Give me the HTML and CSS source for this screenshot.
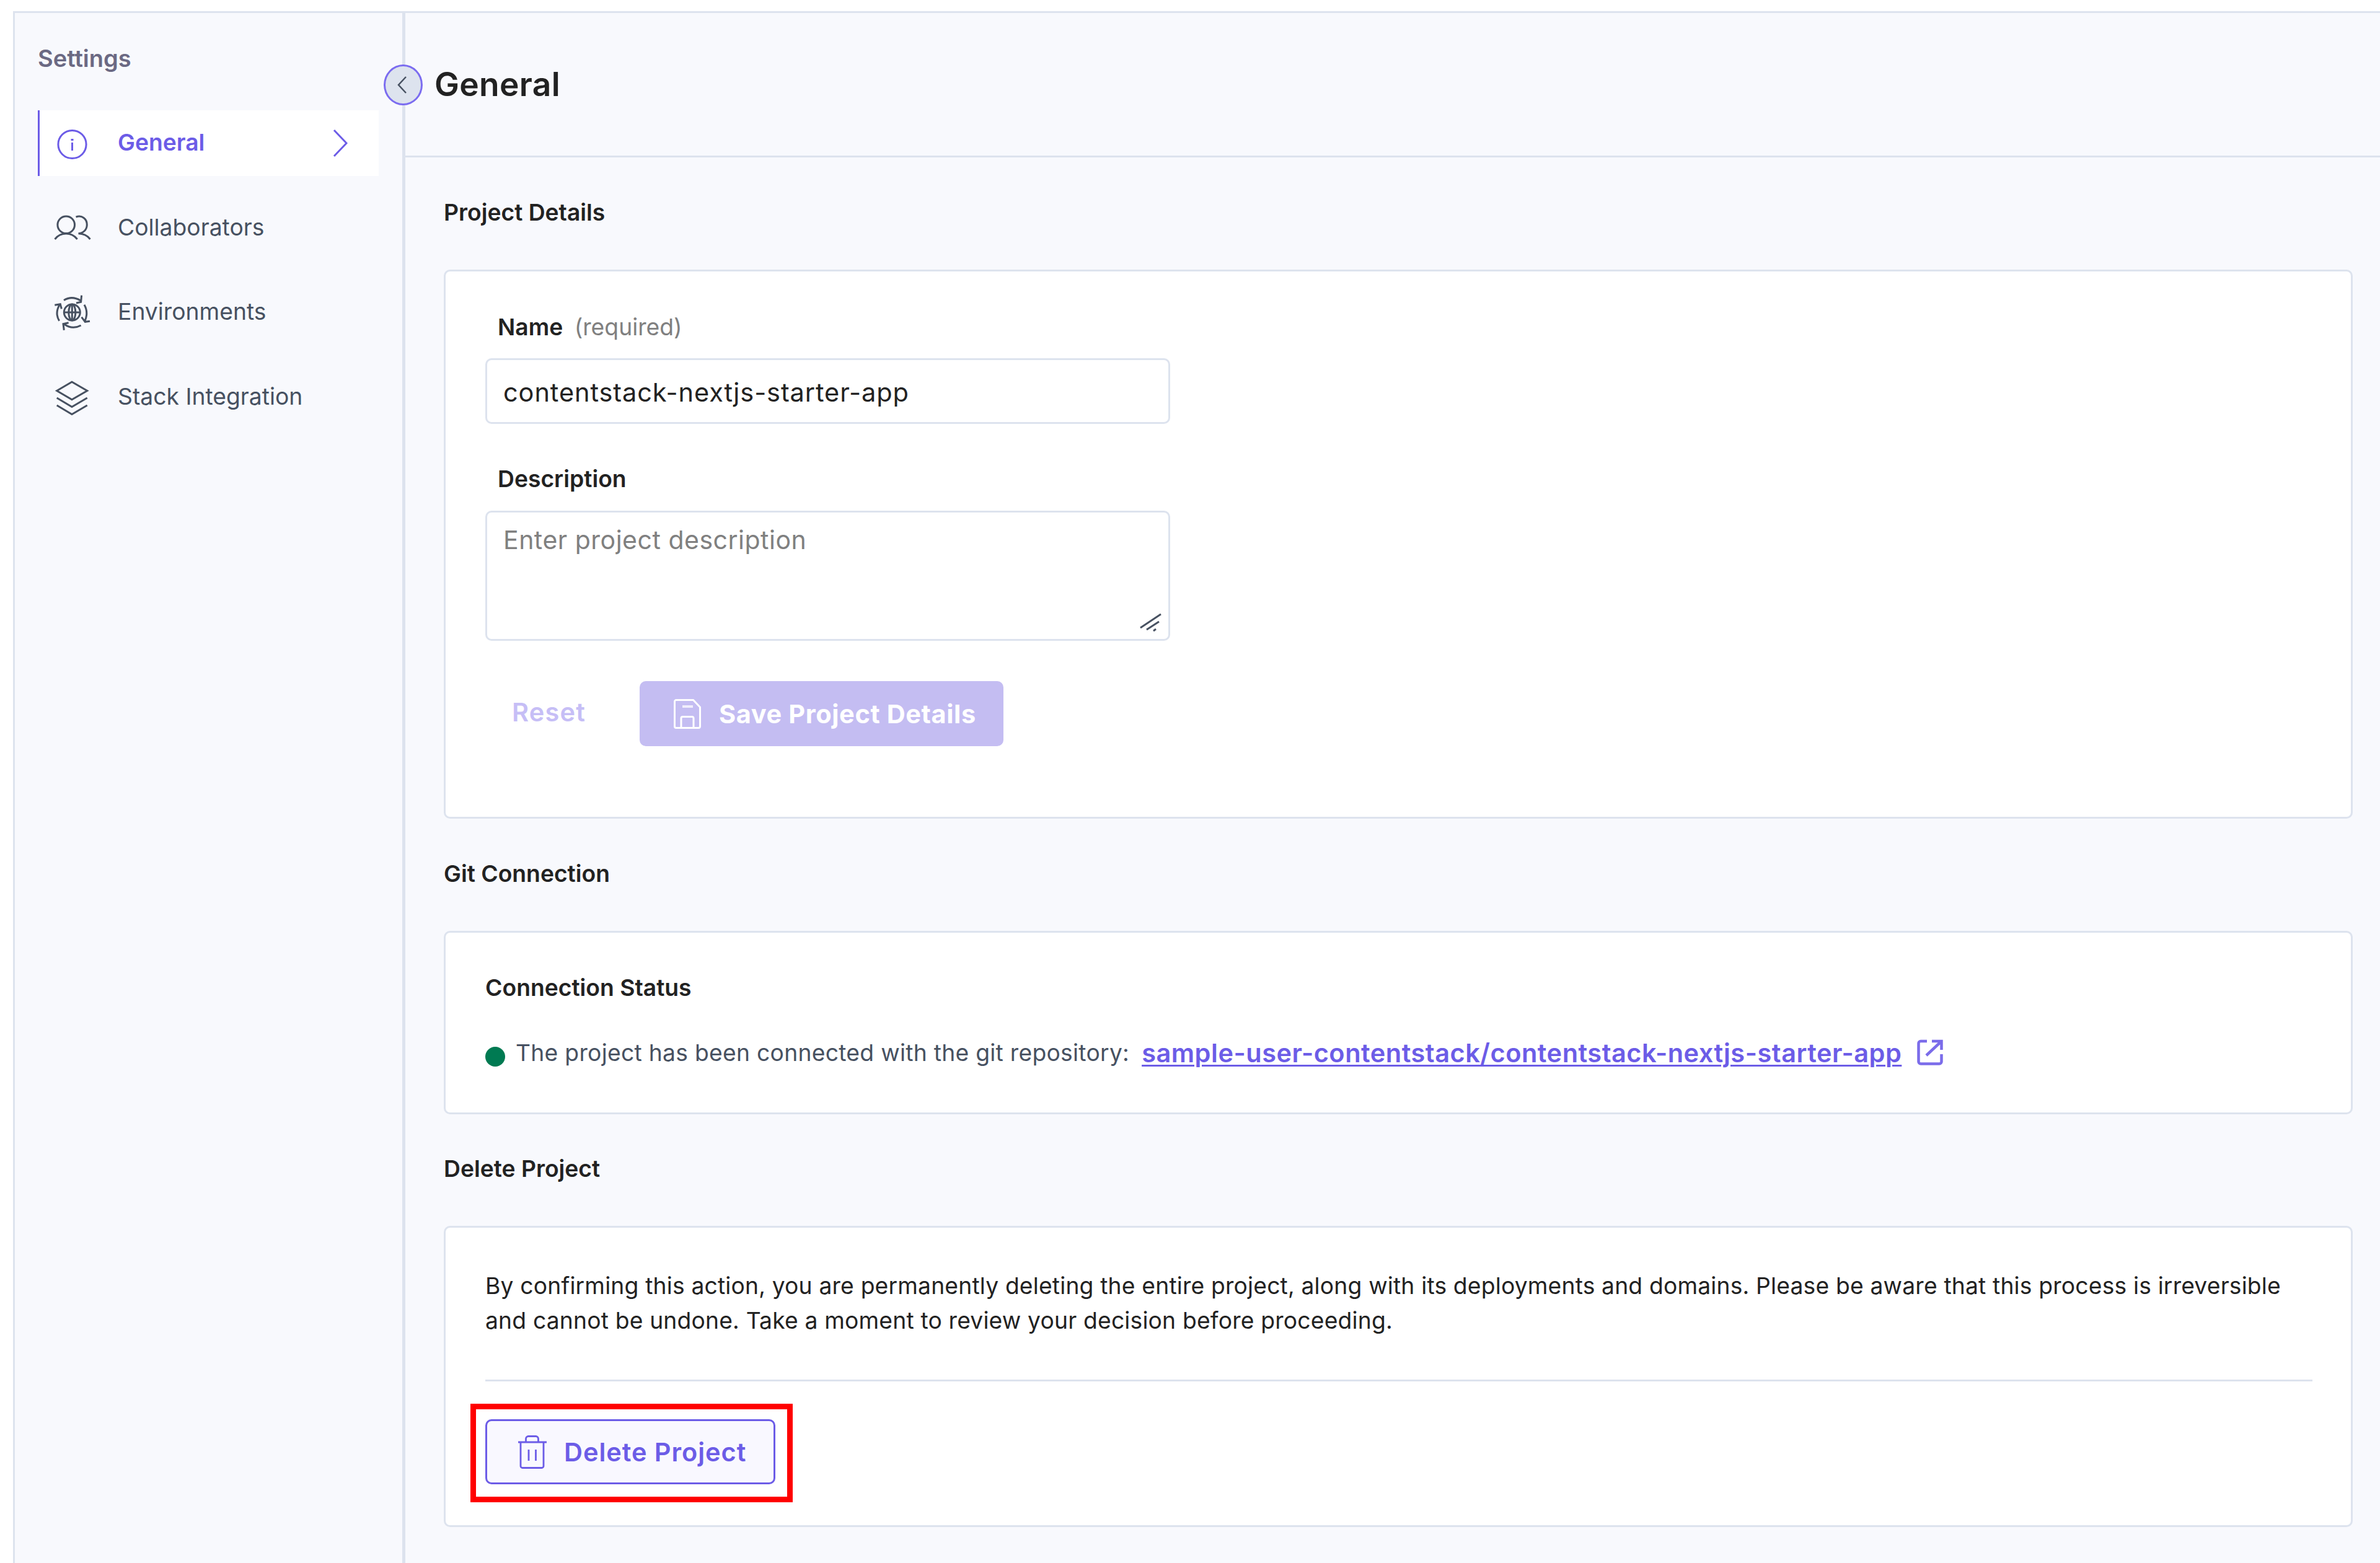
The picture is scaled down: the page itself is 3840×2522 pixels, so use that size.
FILE: index.html
```html
<!DOCTYPE html>
<html lang="en">
<head>
<meta charset="utf-8">
<title>Settings - General</title>
<link rel="stylesheet" href="styles.css">
</head>
<body>
<div class="app">
  <aside class="sidebar">
    <h2 class="sidebar-title">Settings</h2>
    <nav class="nav">
      <a class="nav-item active">
        <svg class="nav-icon" viewBox="0 0 60 60"><circle cx="29.5" cy="32" r="22.6"/><path d="M29.5 29v13"/><path d="M29.5 23v3" stroke-width="4"/></svg>
        <span class="nav-label">General</span>
        <svg class="nav-chevron" viewBox="0 0 24 46"><path d="M2 2l20 21L2 44"/></svg>
      </a>
      <a class="nav-item">
        <svg class="nav-icon" viewBox="0 0 60 60"><circle cx="19.7" cy="24.8" r="13.8"/><path d="M1.5 48C6 42 12 39 19.7 39S33 42 37.7 48M35.5 12.2C45 8.500 53.500 15 53.300 25C53 33 47 38.500 39.500 38.800C47 39 54 42 58.500 48"/></svg>
        <span class="nav-label">Collaborators</span>
      </a>
      <a class="nav-item">
        <svg class="nav-icon" viewBox="0 0 60 60"><circle cx="29.3" cy="30" r="13"/><ellipse cx="29.3" cy="30" rx="5.500" ry="13"/><path d="M29.300 17v26M16.300 30h26"/><path d="M16 10.500Q29 2.500 43 11M44.600 2.700L43.600 13.300L36 15M49 17.700Q56 30 50 44M44.600 37.700L50.300 45.300L58 44.300M43.600 51Q29.700 58.500 16.500 49M23.600 46.700L15 48.700L16.300 58.700M8.600 43.700Q1 31 9.500 17M1.300 18.300L10.300 16.700L12.300 24.300"/></svg>
        <span class="nav-label">Environments</span>
      </a>
      <a class="nav-item">
        <svg class="nav-icon" viewBox="0 0 60 60"><path d="M4.700 19.500L29 5.300L53.700 19.500L29 33.800ZM4.700 31L29 45.500L53.700 31M4.700 43L29 57.500L53.700 43"/></svg>
        <span class="nav-label">Stack Integration</span>
      </a>
    </nav>
    <button class="collapse"><svg viewBox="0 0 18 30"><path d="M15 2L3 15l12 13"/></svg></button>
  </aside>

  <main class="main">
    <header class="header"><h1 class="page-title">General</h1></header>
    <div class="content">
      <h3 class="section-title">Project Details</h3>
      <section class="card card-details">
        <label class="label">Name <span class="required">(required)</span></label>
        <div class="input">contentstack-nextjs-starter-app</div>
        <label class="label label-description">Description</label>
        <div class="textarea">Enter project description
          <svg class="grip" viewBox="0 0 40 32"><path d="M4 25L37 3M14 28L34 15M25 30L29 27"/></svg>
        </div>
        <div class="actions">
          <button class="btn-reset">Reset</button>
          <button class="btn-save">
            <svg class="save-icon" viewBox="0 0 44 48"><path d="M4 1.500H31.500L42.500 13V44a2.500 2.500 0 0 1-2.500 2.500H4A2.500 2.500 0 0 1 1.500 44V4A2.500 2.500 0 0 1 4 1.500ZM12 46V31a2.500 2.500 0 0 1 2.500-2.500h15A2.500 2.500 0 0 1 32 31V46"/><path d="M14 12h17" stroke-width="4" opacity=".75"/></svg>
            Save Project Details
          </button>
        </div>
      </section>

      <h3 class="section-title">Git Connection</h3>
      <section class="card card-git">
        <h4 class="status-title">Connection Status</h4>
        <div class="status-row">
          <span class="dot"></span>
          <span class="status-text">The project has been connected with the git repository:</span>
          <a class="repo-link">sample-user-contentstack/contentstack-nextjs-starter-app</a>
          <svg class="external-icon" viewBox="0 0 42 42"><path d="M16 3H6a3.500 3.500 0 0 0-3.500 3.500V36A3.500 3.500 0 0 0 6 39.500H36A3.500 3.500 0 0 0 39.500 36V24M24 3H39.500V17M39 3.500L15 26"/></svg>
        </div>
      </section>

      <h3 class="section-title">Delete Project</h3>
      <section class="card card-delete">
        <p class="warning">By confirming this action, you are permanently deleting the entire project, along with its deployments and domains. Please be aware that this process is irreversible<br>and cannot be undone. Take a moment to review your decision before proceeding.</p>
        <hr class="divider">
        <div class="delete-wrap">
          <button class="btn-delete">
            <svg class="trash-icon" viewBox="0 0 46 54"><path d="M0 11H46M12.500 11V5.500a4 4 0 0 1 4-4h12a4 4 0 0 1 4 4V11M4 11V49.500a3 3 0 0 0 3 3H38a3 3 0 0 0 3-3V11M17 23V41M28.500 23V41"/></svg>
            Delete Project
          </button>
          <span class="highlight"></span>
        </div>
      </section>
    </div>
  </main>
</div>
</body>
</html>
```
FILE: styles.css
```css
* { box-sizing: border-box; }
body {
  margin: 0;
  padding: 18px 0 0 21px;
  height: 2522px;
  overflow: hidden;
  background: #fff;
  color: #222;
  font-family: Inter, "Liberation Sans", sans-serif;
  font-size: 37.25px;
  line-height: 56px;
}
h1, h2, h3, h4, p { margin: 0; font-size: inherit; font-weight: 600; }
button { margin: 0; padding: 0; border: 0; background: none; font: inherit; white-space: nowrap; }
svg { display: block; flex: none; fill: none; stroke: currentColor; stroke-width: 3; }

.app {
  display: flex;
  height: 2504px;
  background: #f8f9fd;
  border-top: 3px solid #dde3ee;
  border-left: 3px solid #dde3ee;
}

/* Sidebar */
.sidebar { position: relative; width: 630px; padding: 45px 0 0 37px; border-right: 5px solid #dde3ee; }
.sidebar-title { color: #6b6983; font-size: 38px; }
.nav { display: flex; flex-direction: column; gap: 30.5px; margin-top: 56px; }
.nav-item {
  display: flex;
  align-items: center;
  width: 550px;
  height: 106px;
  padding: 0 50px 0 23px;
  border-left: 3px solid transparent;
  color: #475161;
}
.nav-item.active { background: #fff; border-color: #6c5ce7; color: #6c5ce7; font-weight: 600; }
.nav-icon { width: 60px; height: 60px; }
.nav-label { flex: 1; margin-left: 43px; padding-bottom: 2px; }
.nav-chevron { width: 24px; height: 46px; }
.collapse {
  position: absolute;
  top: 83px;
  right: -33px;
  z-index: 1;
  display: flex;
  align-items: center;
  justify-content: center;
  width: 63px;
  height: 66px;
  border: 3px solid #7b6cf0;
  border-radius: 50%;
  background: #dde3ee;
  color: #475161;
}
.collapse svg { width: 18px; height: 30px; margin-right: 4px; stroke-width: 2.5; }

/* Main column */
.main { flex: 1; min-width: 0; }
.header { display: flex; align-items: center; height: 233px; padding-left: 47px; border-bottom: 3px solid #dde3ee; }
.page-title { font-size: 53.3px; letter-spacing: .3px; line-height: 80px; }
.content { padding: 61px 44px 0 62px; }
.section-title { margin-bottom: 64px; }
.card {
  margin-bottom: 61px;
  padding: 0 62px 0 64px;
  background: #fff;
  border: 3px solid #dde3ee;
  border-radius: 10px;
}

/* Project details */
.card-details { height: 886px; padding-top: 62px; }
.label { display: block; padding-left: 20px; font-weight: 600; }
.required { margin-left: 9px; color: #808080; font-weight: 400; }
.input, .textarea {
  width: 1105px;
  padding: 0 26px;
  border: 3px solid #dde3ee;
  border-radius: 10px;
}
.input { height: 106px; margin-top: 22px; padding-top: 24px; font-size: 41.5px; letter-spacing: .9px; }
.label-description { margin-top: 61px; }
.textarea { position: relative; height: 210px; margin-top: 23px; padding-top: 16px; color: #808080; font-size: 41px; letter-spacing: .5px; }
.grip { position: absolute; right: 9px; bottom: 11px; width: 40px; height: 32px; color: #475161; }
.actions { display: flex; margin-top: 65px; font-size: 41.5px; }
.btn-reset { width: 249px; padding: 0 0 6px 43px; color: #c6bef6; font-weight: 600; letter-spacing: 1.2px; text-align: left; }
.btn-save {
  display: flex;
  align-items: center;
  gap: 29px;
  width: 587px;
  height: 105px;
  padding-left: 55px;
  border-radius: 10px;
  background: #c4bdf2;
  color: #fff;
  font-weight: 700;
  letter-spacing: .6px;
}
.save-icon { width: 44px; height: 48px; }

/* Git connection */
.card-git { height: 296px; padding-top: 61px; }
.card-git, .card-delete { margin-bottom: 60px; }
.status-row { display: flex; align-items: center; margin-top: 49px; }
.dot { width: 32px; height: 32px; margin: 12px 17px 0 0; border-radius: 50%; background: #007a52; }
.status-text { color: #475161; letter-spacing: .27px; }
.repo-link {
  margin: 0 25px 0 20px;
  color: #6c5ce7;
  font-size: 41.5px;
  font-weight: 600;
  letter-spacing: .5px;
  text-decoration: underline;
  text-decoration-thickness: 3px;
  text-underline-offset: 4px;
}
.external-icon { width: 42px; height: 42px; margin-bottom: 3px; color: #7b6cea; stroke-width: 4.5; }

/* Delete project */
.card-delete { height: 486px; padding-top: 66px; }
.warning { font-weight: 400; letter-spacing: .17px; line-height: 55.5px; white-space: nowrap; }
.divider { height: 3px; margin: 68px 0 61px; border: 0; background: #dde3ee; }
.delete-wrap { position: relative; width: 468px; }
.btn-delete {
  display: flex;
  align-items: center;
  gap: 28px;
  width: 468px;
  height: 105px;
  padding-left: 50px;
  border: 3px solid #6c5ce7;
  border-radius: 10px;
  background: #f9f8ff;
  color: #6c5ce7;
  font-size: 41.5px;
  font-weight: 600;
  letter-spacing: .95px;
}
.trash-icon { width: 46px; height: 54px; stroke-width: 2.8; }
.highlight { position: absolute; top: -25px; left: -24px; width: 520px; height: 159px; border: 9px solid #f00; }
```
